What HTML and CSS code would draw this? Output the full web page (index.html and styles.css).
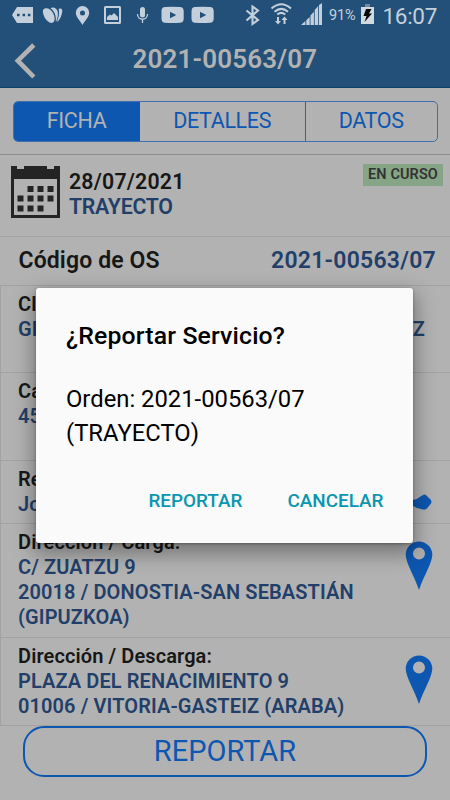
FILE: index.html
```html
<!DOCTYPE html>
<html lang="es">
<head>
<meta charset="utf-8">
<title>2021-00563/07</title>
<link rel="stylesheet" href="styles.css">
</head>
<body>
<div class="screen">
  <div class="status">
    <svg class="notif" width="220" height="30" viewBox="0 0 220 30" fill="#c3d0dc">
      <path fill-rule="evenodd" d="M17 7H33V23H17L12 15ZM17 13.700v2.600h2.600v-2.600ZM22.500 13.700v2.600h2.600v-2.600ZM27.800 13.700v2.600h2.600v-2.600Z"/>
      <path d="M43 10C45 6.500 51 8 53.500 14C56 20 54 23 51 23C46 22 42 14 43 10Z"/>
      <path d="M50.500 8.300C53 6.500 57 8 57.800 12C58.300 16 57 20 55.800 22C56.500 16 54.500 11 50.500 8.300Z"/>
      <path d="M58.700 9C61.500 7.500 63 10 62 13C61 18 58.500 21 56.800 22C59 17 59.500 13 58.700 9Z"/>
      <path fill-rule="evenodd" d="M82.500 6A6.700 6.700 0 0 1 89.200 12.700C89.200 17 84.500 21 82.500 25C80.500 21 75.800 17 75.800 12.700A6.700 6.700 0 0 1 82.500 6ZM82.500 10.500A2.500 2.500 0 1 0 82.500 15.500A2.500 2.500 0 1 0 82.500 10.500Z"/>
      <path fill-rule="evenodd" d="M105.500 6H119.500Q121 6 121 7.500V22.500Q121 24 119.500 24H105.500Q104 24 104 22.500V7.500Q104 6 105.500 6ZM106 8V22H119V8ZM107 20V17L110 14.500L111.500 15.500L114 13L118 17V20Z"/>
      <rect x="140" y="7" width="5" height="10.500" rx="2.500"/>
      <path d="M137.500 14C137.500 21 147.500 21 147.500 14M142.500 19V23" fill="none" stroke="#c3d0dc" stroke-width="1.300"/>
      <path fill-rule="evenodd" d="M165 7Q172.500 6.300 180 7Q183.500 7 183.700 11V19Q183.500 22.500 180 22.700Q172.500 23.400 165 22.700Q161.700 22.500 161.500 19V11Q161.700 7 165 7ZM170 11.800V18.200L176.300 15Z"/>
      <path fill-rule="evenodd" d="M195 7Q202.500 6.300 210 7Q213.500 7 213.700 11V19Q213.500 22.500 210 22.700Q202.500 23.400 195 22.700Q191.700 22.500 191.500 19V11Q191.700 7 195 7ZM200 11.800V18.200L206.300 15Z"/>
    </svg>
    <svg class="signals" width="82" height="30" viewBox="240 0 82 30" fill="#c3d0dc">
      <path d="M246.500 10.500L258 20L252.500 24V6.500L258 10.500L246.500 20.500" fill="none" stroke="#c3d0dc" stroke-width="2.100"/>
      <g fill="none" stroke="#c3d0dc" stroke-width="2"><path d="M271.500 8.500Q281.300 0 291 8.500M274.500 11.700Q281.300 6 288 11.700M277.300 14.500Q281.300 11.200 285.200 14.500"/></g>
      <path d="M277 17h2v4h2l-3 3.500l-3-3.500h2ZM283.500 24h2v-4h2l-3-3.500l-3 3.500h2Z"/>
      <path d="M301 25L305.400 21.100V25ZM306.300 20.200L309.700 17V25H306.300ZM310.500 15.500L313.900 11.700V25H310.500ZM314.700 10L318.200 6V25H314.700ZM319 5L322 3V25H319Z"/>
    </svg>
    <span class="percent">91%</span>
    <svg class="battery" width="13" height="22" viewBox="0 0 13 22"><path d="M4 1h5v3H4Z" fill="#6e8ba5"/><path d="M0 4h13v17H0Z" fill="#d0dae2"/><path d="M5 6L10.500 6L8 10.500L11 10.500L3.500 19L5.500 13L2.500 13Z" fill="#080808"/></svg>
    <span class="clock">16:07</span>
  </div>
  <div class="header">
    <svg class="back" width="24" height="36" viewBox="0 0 24 36"><path d="M20.800 2L4.800 17.700L20.800 34" fill="none" stroke="#b2b2b2" stroke-width="4.600"/></svg>
    <span class="title">2021-00563/07</span>
  </div>
  <div class="tabs">
    <div class="tab active">FICHA</div>
    <div class="tab">DETALLES</div>
    <div class="tab">DATOS</div>
  </div>
  <div class="summary">
    <svg class="calendar" width="49" height="52" viewBox="0 0 49 52"><path fill="#242424" fill-rule="evenodd" d="M0 0H6V3H13V0H36V3H43V0H49V52H0ZM3 13V49H46V13Z"/><path fill="#242424" d="M16.500 20h6v6h-6ZM26.500 20h6v6h-6ZM36.500 20h6v6h-6ZM6.500 29.500h6v6h-6ZM16.500 29.500h6v6h-6ZM26.500 29.500h6v6h-6ZM36.500 29.500h6v6h-6ZM6.500 39.500h6v6h-6ZM16.500 39.500h6v6h-6ZM26.500 39.500h6v6h-6Z"/></svg>
    <div class="when"><div>28/07/2021</div><div class="kind">TRAYECTO</div></div>
    <div class="badge">EN CURSO</div>
  </div>
  <div class="code"><span>Código de OS</span><span class="code-value">2021-00563/07</span></div>
  <div class="rows">
    <div class="row client"><div>Cl</div><div class="value split"><span>GI</span><span>Z</span></div></div>
    <div class="row load"><div>Ca</div><div class="value">45</div></div>
    <div class="row contact">
      <div class="text"><div>Re</div><div class="value">Jo</div></div>
      <svg class="phone" width="22" height="17" viewBox="0 0 22 17"><path d="M0 5Q5 7 9 3.500L13 1Q14.500 0 16.500 1.500L21 6Q22 8 21 9.500L17 14.500Q15.500 16 13 15.500L7 14L3 12L0 12Z" fill="#0d57b1"/></svg>
    </div>
    <div class="row pickup">
      <div class="text"><div>Dirección / Carga:</div><div class="value">C/ ZUATZU 9<br>20018 / DONOSTIA-SAN SEBASTIÁN<br>(GIPUZKOA)</div></div>
      <svg class="pin" width="28" height="50" viewBox="0 0 28 50"><path fill="#0d57b1" fill-rule="evenodd" d="M14 .5A13.300 13.300 0 0 1 27.300 13.500C27.300 22 19 34 14 49C9 34 .7 22 .7 13.500A13.300 13.300 0 0 1 14 .5ZM14 6.500A6 6 0 1 0 14 18.500A6 6 0 1 0 14 6.500Z"/></svg>
    </div>
    <div class="row drop">
      <div class="text"><div>Dirección / Descarga:</div><div class="value">PLAZA DEL RENACIMIENTO 9<br>01006 / VITORIA-GASTEIZ (ARABA)</div></div>
      <svg class="pin" width="28" height="50" viewBox="0 0 28 50"><path fill="#0d57b1" fill-rule="evenodd" d="M14 .5A13.300 13.300 0 0 1 27.300 13.500C27.300 22 19 34 14 49C9 34 .7 22 .7 13.500A13.300 13.300 0 0 1 14 .5ZM14 6.500A6 6 0 1 0 14 18.500A6 6 0 1 0 14 6.500Z"/></svg>
    </div>
  </div>
  <div class="report">REPORTAR</div>
  <div class="dialog">
    <div class="dialog-title">¿Reportar Servicio?</div>
    <div class="dialog-body">Orden: 2021-00563/07<br>(TRAYECTO)</div>
    <div class="actions"><span class="act-report">REPORTAR</span><span class="act-cancel">CANCELAR</span></div>
  </div>
</div>
</body>
</html>
```
FILE: styles.css
```css
* { box-sizing: border-box; }
body { margin: 0; font-family: Roboto, "Liberation Sans", sans-serif; }
svg { display: block; flex: none; }
.screen { position: relative; width: 450px; height: 800px; overflow: hidden; background: #b2b2b2; color: #171717; white-space: nowrap; }
.status { height: 31px; display: flex; background: #235078; color: #c3d0dc; }
.signals { margin-left: 20px; }
.percent { margin-left: 7px; width: 28px; font-size: 14.5px; line-height: 31px; letter-spacing: -0.1px; }
.battery { margin: 3px 0 0 4px; }
.clock { margin-left: 8.5px; font-size: 22.5px; line-height: 33px; letter-spacing: -0.3px; }
.header { height: 57px; display: flex; background: #235078; border-bottom: 1px solid #0c4168; }
.back { margin: 12px 0 0 13px; }
.title { margin-left: 95.5px; font-size: 26px; line-height: 56px; font-weight: 600; color: #b2b2b2; letter-spacing: 0.15px; }
.tabs { display: flex; height: 41px; width: 425px; margin: 13px 0 0 12.5px; border: 1px solid #416fae; border-radius: 5px; overflow: hidden; color: #0d57b1; font-size: 21.5px; letter-spacing: -0.35px; line-height: 37px; text-align: center; }
.tab { flex: 1; }
.tab.active { flex: none; width: 126.2px; background: #0d57b1; color: #b2b2b2; }
.tab:nth-child(2) { flex: none; width: 166px; border-right: 1px solid #2a62ac; }
.summary { display: flex; height: 82px; margin-top: 12px; border-top: 1px solid #8c8c8c; font-weight: 600; }
.calendar { margin: 11px 0 0 11px; }
.when { margin: 14px 0 0 9px; font-size: 21.3px; line-height: 25px; }
.when > div:first-child { letter-spacing: 0.2px; }
.kind, .value, .code-value { color: #223f6a; }
.when > .kind { letter-spacing: -0.25px; }
.badge { margin: 9px 7px 0 auto; width: 80px; height: 22px; background: #86a586; color: #333; font-size: 14.5px; letter-spacing: 0.1px; line-height: 21px; text-align: center; }
.code { display: flex; justify-content: space-between; height: 49px; padding: 0 14px 0 18.5px; border-top: 1px solid #a2a2a2; font-size: 23px; line-height: 48px; font-weight: 600; letter-spacing: 0.12px; }
.code-value { letter-spacing: 0.25px; }
.rows { height: 441px; border-left: 1px solid #a2a2a2; border-bottom: 1px solid #a2a2a2; font-size: 20px; line-height: 25px; font-weight: 600; letter-spacing: 0.1px; }
.row { padding: 6px 17px 0; border-top: 1px solid #a2a2a2; }
.client { height: 87px; }
.load { height: 88px; }
.contact { height: 63px; display: flex; }
.pickup { height: 114px; display: flex; }
.drop { height: 88px; display: flex; }
.text { flex: 1; }
.split { display: flex; justify-content: space-between; padding-right: 8px; }
.phone { margin: 27px 1px 0 0; }
.pin { margin: 11px 0 0; }
.report { width: 404px; height: 51px; margin: 0 0 0 23px; border: 2px solid #0d57b1; border-radius: 21px; color: #0d57b1; font-size: 29px; line-height: 47px; text-align: center; }
.dialog { position: absolute; left: 36px; top: 287.5px; width: 377px; height: 255px; padding: 31.5px 29.5px 0 30px; border-radius: 3px; background: #fafafa; color: #000; box-shadow: 0 8px 20px 3px rgba(0,0,0,.34), 0 1px 3px rgba(0,0,0,.3); }
.dialog-title { font-size: 24.8px; letter-spacing: 0.15px; line-height: 34px; font-weight: 500; }
.dialog-body { margin-top: 30px; font-size: 23.8px; line-height: 33.5px; }
.actions { display: flex; justify-content: flex-end; gap: 45px; margin-top: 36.5px; color: #0a95b0; font-size: 18.9px; line-height: 28px; font-weight: 500; }
```
